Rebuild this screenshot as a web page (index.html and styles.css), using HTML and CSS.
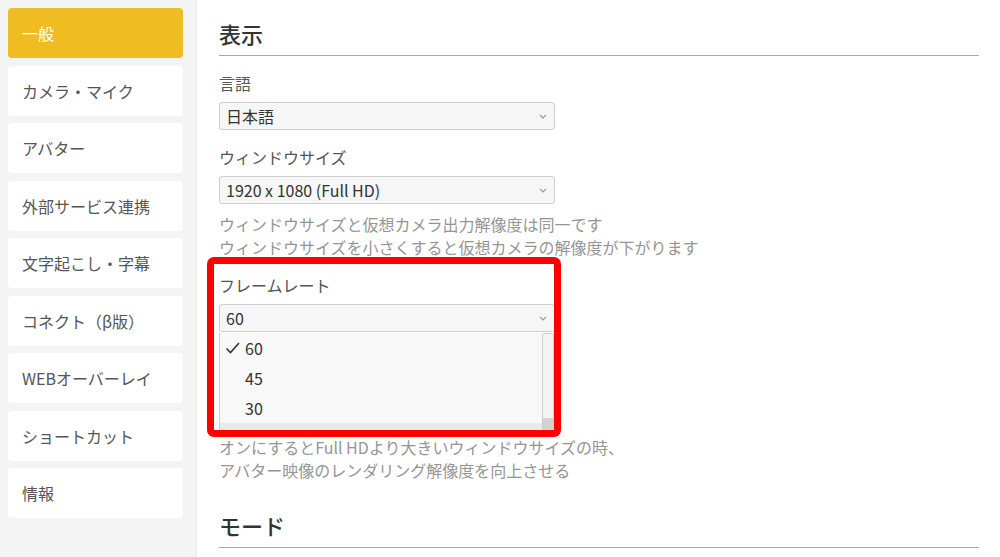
FILE: index.html
```html
<!DOCTYPE html>
<html lang="ja">
<head>
<meta charset="utf-8">
<title>設定</title>
<link rel="stylesheet" href="styles.css">
</head>
<body>
<div class="app">
  <nav class="sidebar">
    <div class="nav-item active">一般</div>
    <div class="nav-item">カメラ・マイク</div>
    <div class="nav-item">アバター</div>
    <div class="nav-item">外部サービス連携</div>
    <div class="nav-item">文字起こし・字幕</div>
    <div class="nav-item">コネクト（β版）</div>
    <div class="nav-item">WEBオーバーレイ</div>
    <div class="nav-item">ショートカット</div>
    <div class="nav-item">情報</div>
  </nav>
  <main class="content">
    <h2 class="section-title">表示</h2>

    <div class="field">
      <div class="label">言語</div>
      <div class="select"><span>日本語</span>
        <svg class="chev" width="8" height="5" viewBox="0 0 8 5"><polyline points="1,1 4,4 7,1" fill="none" stroke="#999" stroke-width="1.1"/></svg>
      </div>
    </div>

    <div class="field">
      <div class="label">ウィンドウサイズ</div>
      <div class="select"><span>1920 x 1080 (Full HD)</span>
        <svg class="chev" width="8" height="5" viewBox="0 0 8 5"><polyline points="1,1 4,4 7,1" fill="none" stroke="#999" stroke-width="1.1"/></svg>
      </div>
      <p class="help">ウィンドウサイズと仮想カメラ出力解像度は同一です<br>ウィンドウサイズを小さくすると仮想カメラの解像度が下がります</p>
    </div>

    <div class="field framerate">
      <div class="label">フレームレート</div>
      <div class="select-wrap">
        <div class="select"><span>60</span>
          <svg class="chev" width="8" height="5" viewBox="0 0 8 5"><polyline points="1,1 4,4 7,1" fill="none" stroke="#999" stroke-width="1.1"/></svg>
        </div>
        <div class="dropdown">
          <div class="option"><svg class="check" width="16" height="14" viewBox="0 0 16 14"><polyline points="1.5,7.5 5.5,11.5 14,2" fill="none" stroke="#333" stroke-width="1.6"/></svg><span>60</span></div>
          <div class="option"><span class="check-space"></span><span>45</span></div>
          <div class="option"><span class="check-space"></span><span>30</span></div>
          <div class="option hover"></div>
          <div class="scrollbar"><div class="thumb"></div></div>
        </div>
      </div>
      <div class="highlight"></div>
    </div>

    <div class="covered"></div>
    <p class="help tight">オンにするとFull HDより大きいウィンドウサイズの時、<br>アバター映像のレンダリング解像度を向上させる</p>

    <h2 class="section-title second">モード</h2>
  </main>
</div>
</body>
</html>
```

FILE: styles.css
```css
html, body {
  margin: 0;
  padding: 0;
  background: #ffffff;
}
body {
  font-family: "Noto Sans CJK JP", "Noto Sans", sans-serif;
  color: #333;
  width: 1000px;
  height: 557px;
  overflow: hidden;
}
.app {
  display: flex;
  height: 557px;
}
.sidebar {
  width: 197px;
  flex: none;
  background: #f4f4f4;
  border-right: 1px solid #ebebeb;
  padding: 8px 13px 0 8px;
  box-sizing: border-box;
  display: flex;
  flex-direction: column;
  gap: 7.5px;
}
.nav-item {
  height: 50px;
  line-height: 50px;
  background: #ffffff;
  border-radius: 4px;
  padding-left: 14px;
  font-size: 16px;
  color: #555;
  white-space: nowrap;
}
.nav-item.active {
  background: #efbd22;
  color: #ffffff;
}
.content {
  flex: 1;
  padding: 0 21px 0 22px;
  position: relative;
}
.section-title {
  margin: 0;
  padding-top: 14px;
  padding-bottom: 3px;
  line-height: 38px;
  font-size: 22px;
  font-weight: 500;
  color: #333;
  border-bottom: 1.5px solid #a8a8a8;
}
.section-title.second {
  margin-top: 10px;
}
.field {
  margin-top: 15px;
}
.label {
  font-size: 16px;
  line-height: 24px;
  color: #555;
  margin-bottom: 7px;
}
.select {
  width: 336px;
  height: 28px;
  box-sizing: border-box;
  border: 1px solid #cfcfcf;
  border-radius: 3px;
  background: #f6f6f6;
  display: flex;
  align-items: center;
  justify-content: space-between;
  padding: 0 7px 0 6px;
  font-size: 16px;
  color: #333;
}
.chev {
  display: block;
}
.help {
  margin: 9px 0 0;
  font-size: 16px;
  line-height: 23px;
  color: #959595;
}
.help.tight {
  margin-top: 0;
}
.framerate {
  position: relative;
  margin-top: 14px;
}
.select-wrap {
  position: relative;
}
.dropdown {
  position: absolute;
  left: 0;
  top: 29px;
  width: 335px;
  height: 104px;
  overflow: hidden;
  background: #f8f8f8;
  border-left: 1px solid #cfcfcf;
  box-sizing: border-box;
  z-index: 2;
}
.option {
  height: 30px;
  display: flex;
  align-items: center;
  padding-left: 5px;
  font-size: 16px;
  color: #333;
}
.option.hover {
  background: #e9e9e9;
}
.check {
  width: 16px;
  margin-right: 4px;
  display: block;
}
.check-space {
  width: 20px;
  display: block;
}
.scrollbar {
  position: absolute;
  right: 0;
  top: 0;
  width: 12px;
  bottom: 0;
  box-sizing: border-box;
  border: 1px solid #cdcdcd;
  border-radius: 2px;
  background: #f3f3f3;
}
.thumb {
  position: absolute;
  left: 0;
  right: 0;
  top: 84px;
  bottom: 0;
  background: #d2d2d2;
}
.highlight {
  position: absolute;
  left: -12px;
  top: -16px;
  width: 354px;
  height: 180px;
  box-sizing: border-box;
  border: 7px solid #ff0000;
  border-radius: 7px;
  z-index: 3;
  pointer-events: none;
}
.covered {
  height: 104px;
}
```
